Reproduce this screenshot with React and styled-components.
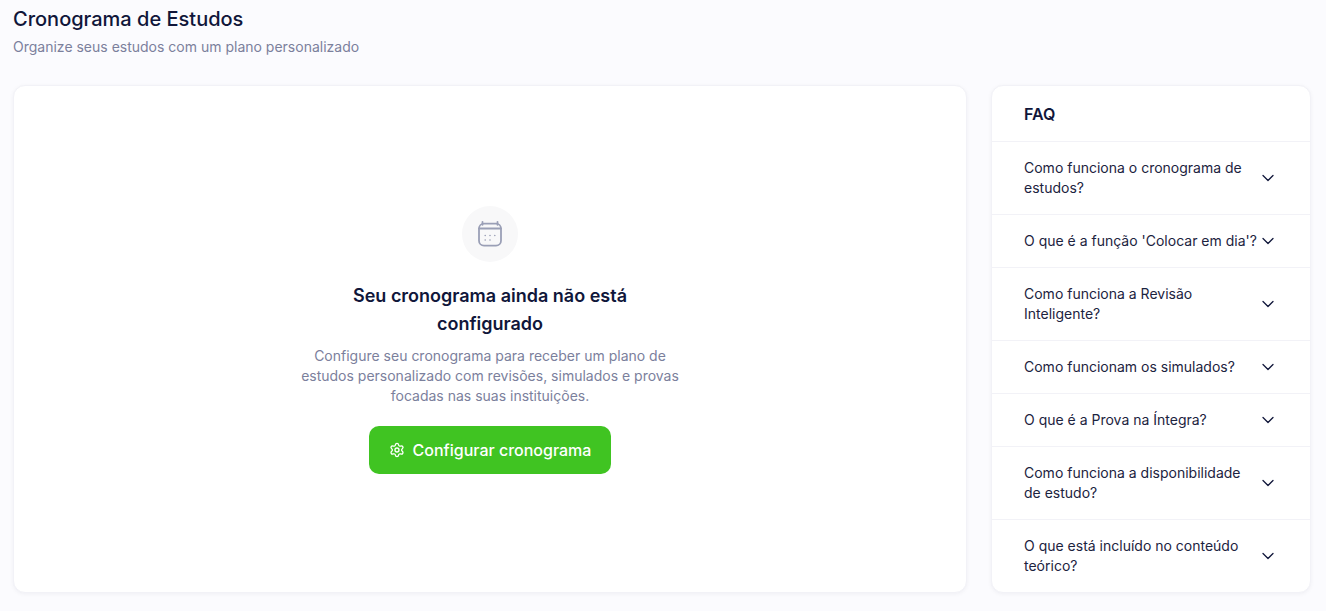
import React from 'react'
import styled, { createGlobalStyle } from 'styled-components'
import { ChevronDown, Settings } from 'lucide-react'

const GlobalStyle = createGlobalStyle`
  html, body {
    margin: 0;
    height: 100%;
    background: #fbfbfe;
    overflow: hidden;
  }

  body {
    font-family: Inter, "Noto Sans", sans-serif;
    color: #10163a;
  }

  * {
    box-sizing: border-box;
  }
`

const Page = styled.div`
  padding: 5px 15px 0 13px;
`

const Header = styled.header`
  margin-bottom: 28px;
`

const Title = styled.h1`
  margin: 0 0 4px;
  font-size: 20px;
  line-height: 28px;
  font-weight: 500;
  color: #10163a;
`

const Subtitle = styled.p`
  margin: 0;
  font-size: 14px;
  line-height: 20px;
  color: #7b809c;
`

const Columns = styled.div`
  display: grid;
  grid-template-columns: 954px 320px;
  gap: 24px;
  align-items: stretch;
`

const Card = styled.section`
  background: #ffffff;
  border: 1px solid #f2f2f7;
  border-radius: 12px;
  box-shadow: 0 1px 4px rgba(16, 22, 58, 0.05);
  overflow: hidden;
`

const EmptyCard = styled(Card)`
  display: flex;
  flex-direction: column;
  align-items: center;
  padding-top: 120px;
`

const IconCircle = styled.div`
  width: 56px;
  height: 56px;
  border-radius: 50%;
  background: #f8f8f9;
  display: flex;
  align-items: center;
  justify-content: center;
  color: #9a9fb6;
  margin-bottom: 20px;
`

const EmptyTitle = styled.h2`
  margin: 0 0 8px;
  max-width: 300px;
  font-size: 18px;
  line-height: 28px;
  font-weight: 600;
  text-align: center;
  color: #10163a;
`

const EmptyText = styled.p`
  margin: 0 0 20px;
  width: 400px;
  font-size: 14px;
  line-height: 20px;
  text-align: center;
  color: #7b809c;
`

const PrimaryButton = styled.button`
  display: flex;
  align-items: center;
  justify-content: center;
  gap: 8px;
  width: 242px;
  height: 48px;
  border: none;
  border-radius: 10px;
  background: #40c422;
  color: #ffffff;
  font-family: inherit;
  font-size: 16px;
  font-weight: 500;
  cursor: pointer;
`

const FaqTitle = styled.h3`
  margin: 0;
  padding: 16px 32px 15px;
  font-size: 16px;
  line-height: 24px;
  font-weight: 600;
  color: #10163a;
`

const FaqRow = styled.div`
  display: flex;
  align-items: center;
  justify-content: space-between;
  padding: 16px 32px;
  border-top: 1px solid #f2f2f7;
  font-size: 14px;
  line-height: 20px;
  color: #1c2340;

  svg {
    flex: none;
    color: #10163a;
  }
`

const faqItems = [
  'Como funciona o cronograma de estudos?',
  "O que é a função 'Colocar em dia'?",
  'Como funciona a Revisão Inteligente?',
  'Como funcionam os simulados?',
  'O que é a Prova na Íntegra?',
  'Como funciona a disponibilidade de estudo?',
  'O que está incluído no conteúdo teórico?',
]

const CalendarIcon = () => (
  <svg width="28" height="28" viewBox="0 0 28 28" fill="none" stroke="currentColor" strokeWidth="1.8" strokeLinecap="round">
    <rect x="3" y="3.7" width="22" height="22" rx="5" />
    <path d="M3 8.5h22M6.5 1.8v3M21.5 1.8v3" />
    <path d="M9.2 15.5h.01M14 15.5h.01M18.8 15.5h.01M9.2 20h.01M14 20h.01" strokeWidth="1.6" />
  </svg>
)

export default function App() {
  return (
    <Page>
      <GlobalStyle />
      <Header>
        <Title>Cronograma de Estudos</Title>
        <Subtitle>Organize seus estudos com um plano personalizado</Subtitle>
      </Header>
      <Columns>
        <EmptyCard>
          <IconCircle>
            <CalendarIcon />
          </IconCircle>
          <EmptyTitle>Seu cronograma ainda não está configurado</EmptyTitle>
          <EmptyText>
            Configure seu cronograma para receber um plano de estudos personalizado com revisões, simulados e provas focadas nas suas instituições.
          </EmptyText>
          <PrimaryButton>
            <Settings size={16} />
            Configurar cronograma
          </PrimaryButton>
        </EmptyCard>
        <Card>
          <FaqTitle>FAQ</FaqTitle>
          {faqItems.map((item) => (
            <FaqRow key={item}>
              <span>{item}</span>
              <ChevronDown size={20} strokeWidth={1.5} />
            </FaqRow>
          ))}
        </Card>
      </Columns>
    </Page>
  )
}
